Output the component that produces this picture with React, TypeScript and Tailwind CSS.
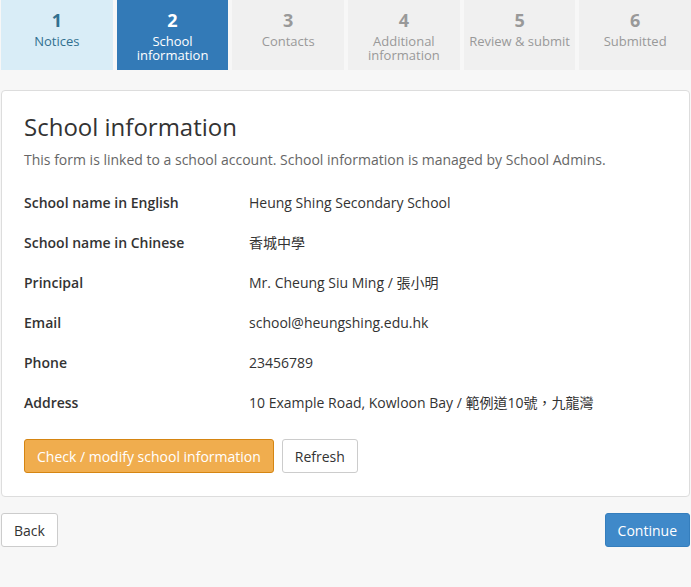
import React from 'react';

const steps = [
    { n: 1, label: 'Notices', state: 'done' },
    { n: 2, label: 'School information', state: 'active' },
    { n: 3, label: 'Contacts', state: 'todo' },
    { n: 4, label: 'Additional information', state: 'todo' },
    { n: 5, label: 'Review & submit', state: 'todo' },
    { n: 6, label: 'Submitted', state: 'todo' },
];

const rows = [
    ['School name in English', 'Heung Shing Secondary School'],
    ['School name in Chinese', '香城中學'],
    ['Principal', 'Mr. Cheung Siu Ming / 張小明'],
    ['Email', 'school@heungshing.edu.hk'],
    ['Phone', '23456789'],
    ['Address', '10 Example Road, Kowloon Bay / 範例道10號，九龍灣'],
];

const App: React.FC = () => {
    return (
        <div
            className="min-h-screen bg-[#f7f7f7] text-[#333] text-[14px]"
            style={{ fontFamily: '"Open Sans", "Noto Sans CJK TC", sans-serif' }}
        >
            {/* step bar */}
            <div className="flex gap-1 pl-px">
                {steps.map((s) => {
                    const tone =
                        s.state === 'done'
                            ? 'bg-[#d9edf7] text-[#31708f]'
                            : s.state === 'active'
                            ? 'bg-[#337ab7] text-white'
                            : 'bg-[#f0f0f0] text-[#999]';
                    return (
                        <div key={s.n} className={`flex-1 h-[70px] flex flex-col items-center pt-[9px] text-center ${tone}`}>
                            <div className="text-[18px] font-bold leading-[22px]">{s.n}</div>
                            <div className="mt-[3px] text-[13px] leading-[14px] whitespace-pre-line">
                                {s.label === 'Review & submit' ? s.label : s.label.replace(' ', '\n')}
                            </div>
                        </div>
                    );
                })}
            </div>

            <div className="mt-5 mx-px bg-white border border-[#ddd] rounded-[4px] px-[22px] pt-[20px] pb-[23px]">
                <h2 className="text-[24px] leading-[32px] font-normal">School information</h2>
                <p className="mt-[7px] text-[#666] leading-[20px]">
                    This form is linked to a school account. School information is managed by School Admins.
                </p>
                <div className="mt-[12px]">
                    {rows.map(([k, v]) => (
                        <div key={k} className="flex h-[40px] items-center">
                            <div className="w-[225px] font-semibold">{k}</div>
                            <div>{v}</div>
                        </div>
                    ))}
                </div>
                <div className="mt-[17px] flex gap-2">
                    <button className="h-[34px] px-3 rounded-[3px] bg-[#f0ad4e] border border-[#d58512] text-white text-[14px]">
                        Check / modify school information
                    </button>
                    <button className="h-[34px] px-3 rounded-[3px] bg-white border border-[#ccc] text-[#333] text-[14px]">
                        Refresh
                    </button>
                </div>
            </div>

            <div className="mt-4 px-px flex justify-between">
                <button className="h-[34px] px-3 rounded-[3px] bg-white border border-[#ccc] text-[#333] text-[14px]">
                    Back
                </button>
                <button className="h-[34px] px-3 rounded-[3px] bg-[#3f89c9] border border-[#357ebd] text-white text-[14px]">
                    Continue
                </button>
            </div>
        </div>
    );
};

export default App;
